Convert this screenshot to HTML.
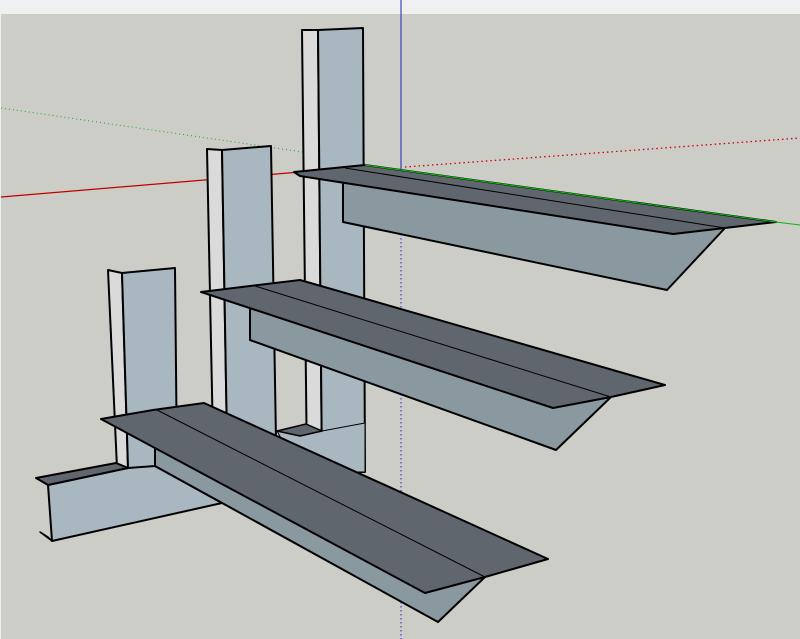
<!DOCTYPE html>
<html><head><style>
html,body{margin:0;padding:0;width:800px;height:639px;overflow:hidden;background:#cdcdc8;}
svg{display:block}
</style></head><body>
<svg width="800" height="639" viewBox="0 0 800 639" xmlns="http://www.w3.org/2000/svg">
<rect x="0" y="0" width="800" height="639" fill="#cdcdc8"/>
<rect x="0" y="0" width="800" height="14" fill="#eff0f2"/>
<rect x="0" y="0" width="1" height="639" fill="#eff0f2"/>
<!-- axes -->
<line x1="1" y1="108" x2="303" y2="152" stroke="#1aa81a" stroke-width="1" stroke-dasharray="1,3"/>
<line x1="1" y1="197" x2="300" y2="172" stroke="#c00000" stroke-width="1.3"/>
<line x1="405" y1="167" x2="800" y2="138" stroke="#d00000" stroke-width="1.3" stroke-dasharray="1.5,3"/>
<line x1="401" y1="0" x2="401" y2="170" stroke="#2020b0" stroke-width="1"/>
<line x1="401" y1="170" x2="401" y2="639" stroke="#2020d0" stroke-width="1" stroke-dasharray="1.5,2.5"/>
<g stroke="#000" stroke-width="2" stroke-linejoin="round">
<!-- C3 -->
<polygon points="302,30 318,30 322,472 307,472" fill="#dadada"/>
<polygon points="318,30 363,28 365,472 322,472" fill="#a9b7c0"/>
<polygon points="277,431 306,424 322,431 365,423 365,472 300,472" fill="#a9b7c0" stroke-width="1"/>
<polygon points="277,431 306,424 322,431 300,436" fill="#5f666d" stroke-width="1.5"/>
<!-- C2 -->
<polygon points="207,149 222,150 227,440 213,440" fill="#dadada"/>
<polygon points="222,150 271,146 276,440 227,440" fill="#a9b7c0"/>
<!-- C1 -->
<polygon points="108,270 122,273 128,468 117,468" fill="#dadada"/>
<polygon points="122,273 175,268 177,468 128,468" fill="#a9b7c0"/>
<!-- foot of C1 -->
<polygon points="48,485 128,468 155,466 222,503 52,541" fill="#a9b7c0"/>
<polygon points="36,478 116,463 128,468 48,485" fill="#5f666d"/>
<polygon points="40,532 52,541 48,537" fill="#5f666d" stroke-width="1.5"/>
<!-- B3 -->
<polygon points="343,180 725,228 667,290 343,222" fill="#8a989f"/>
<polygon points="294,172 365,165 776,222 725,228 673,234 300,176" fill="#5f666d"/>
<line x1="345" y1="168" x2="725" y2="228" stroke-width="1"/>
<!-- B2 -->
<polygon points="250,308 611,397 556,450 250,340" fill="#8a989f"/>
<polygon points="201,292 250,286 300,280 665,385 611,397 553,408" fill="#5f666d"/>
<line x1="255" y1="286" x2="611" y2="397" stroke-width="1"/>
<!-- B1 -->
<polygon points="155,433 485,577 438,622 155,466" fill="#8a989f"/>
<polygon points="101,419 153,410 204,403 548,559 485,577 425,593" fill="#5f666d"/>
<line x1="157" y1="410" x2="485" y2="577" stroke-width="1"/>
</g>
<line x1="365" y1="165" x2="776" y2="222" stroke="#10b010" stroke-width="1.2"/>
<line x1="776" y1="222" x2="800" y2="225" stroke="#10b010" stroke-width="1"/>
</svg>
</body></html>
